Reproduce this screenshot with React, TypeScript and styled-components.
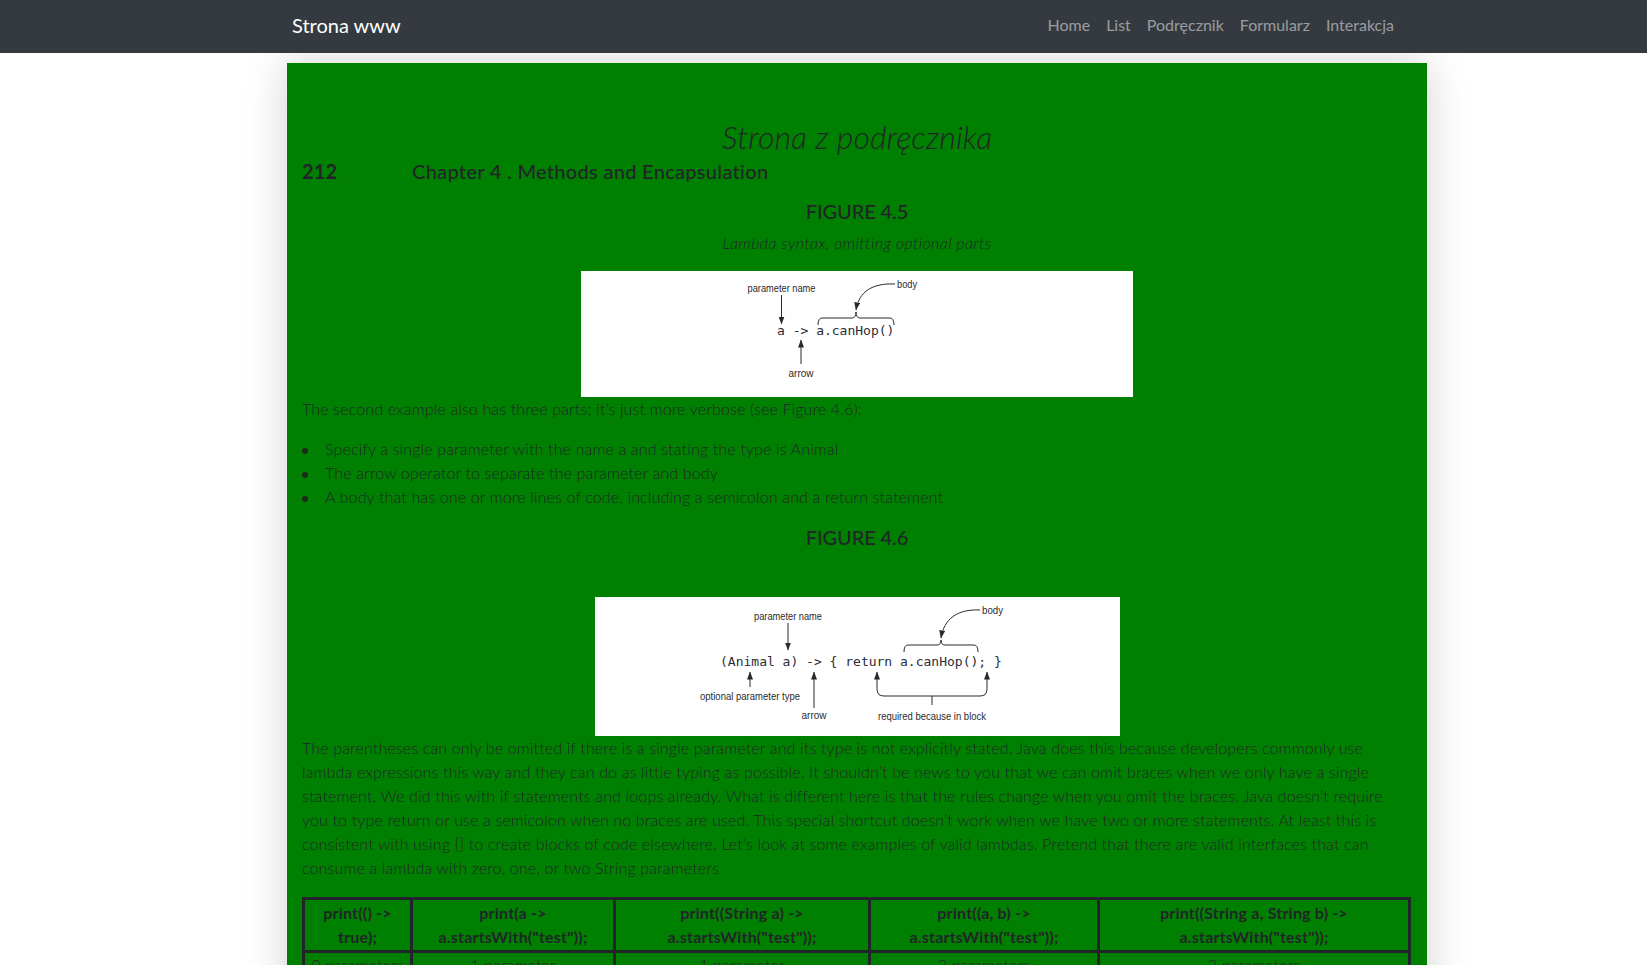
import React from "react";
import styled, { createGlobalStyle } from "styled-components";

const GlobalStyle = createGlobalStyle`
  html, body { margin: 0; padding: 0; background: #ffffff; }
  body {
    font-family: Lato, "Noto Sans", sans-serif;
    color: #212529;
    font-size: 16px;
    line-height: 1.5;
  }
  * { box-sizing: border-box; }
`;

const Navbar = styled.nav`
  position: relative;
  z-index: 1;
  background: #343a40;
  height: 53px;
  padding-bottom: 4px;
  display: flex;
  align-items: center;
`;

const NavInner = styled.div`
  width: 1110px;
  margin-left: 292px;
  display: flex;
  align-items: center;
  justify-content: space-between;
`;

const Brand = styled.a`
  color: #ffffff;
  font-size: 20px;
  line-height: 30px;
  text-decoration: none;
`;

const NavList = styled.ul`
  display: flex;
  list-style: none;
  margin: 0;
  padding: 0;
`;

const NavLink = styled.a`
  display: block;
  padding: 0 8px;
  color: rgba(255, 255, 255, 0.5);
  text-decoration: none;
  font-size: 16px;
  line-height: 24px;
`;

const Page = styled.main`
  width: 1140px;
  margin: 10px 0 0 287px;
  background: #008000;
  padding: 55px 15px 40px;
  box-shadow: 0 0 40px rgba(0, 0, 0, 0.18);
  font-weight: 300;
  letter-spacing: 0.15px;
`;

const Title = styled.h2`
  margin: 0 0 3px;
  font-size: 32px;
  line-height: 1.2;
  font-style: italic;
  font-weight: 300;
  text-align: center;
  letter-spacing: 0.1px;
`;

const ChapterRow = styled.div`
  display: flex;
  margin: 0 0 16px;
  font-size: 20px;
  line-height: 24px;
`;

const PageNum = styled.span`
  width: 110px;
  font-weight: 700;
`;

const ChapterTitle = styled.span`
  font-weight: 500;
  letter-spacing: 0.3px;
`;

const FigureHeading = styled.h5`
  margin: 0 0 8px;
  font-size: 20px;
  line-height: 24px;
  font-weight: 500;
  text-align: center;
  letter-spacing: -0.1px;
`;

const Caption = styled.p`
  margin: 0 0 16px;
  min-height: 24px;
  font-style: italic;
  text-align: center;
  letter-spacing: 0.4px;
`;

const FigureBox = styled.div`
  display: flex;
  justify-content: center;
`;

const FigureSvg = styled.svg`
  display: block;
  background: #ffffff;
  letter-spacing: 0;
`;

const Para = styled.p<{ $mb?: number }>`
  margin: 0 0 ${(p) => p.$mb ?? 16}px;
`;

const List = styled.ul`
  margin: 0 0 16px;
  padding: 0 0 0 23px;
  list-style: none;
`;

const Item = styled.li`
  line-height: 24px;
  &::before {
    content: "";
    display: inline-block;
    width: 6px;
    height: 6px;
    border-radius: 50%;
    background: #1d2a1f;
    margin-left: -23px;
    margin-right: 17px;
    vertical-align: middle;
  }
`;

const Table = styled.table`
  width: 1109px;
  border-collapse: collapse;
  table-layout: fixed;
  border: 3px solid #212529;
`;

const Col = styled.col<{ $w: number }>`
  width: ${(p) => p.$w}px;
`;

const Th = styled.th`
  border: 3px solid #212529;
  padding: 1px 4px;
  font-weight: 700;
  text-align: center;
  line-height: 24px;
  letter-spacing: 0.2px;
`;

const Td = styled.td`
  border: 3px solid #212529;
  padding: 0 4px 2px;
  text-align: center;
  font-weight: 300;
  line-height: 24px;
  white-space: nowrap;
`;

const LABEL = {
  fontFamily: '"Liberation Sans", Arial, sans-serif',
  fontSize: 11,
  fill: "#2b2b2b",
} as const;

const CODE = {
  fontFamily: '"DejaVu Sans Mono", monospace',
  fontSize: 13,
  fill: "#2a2b38",
  whiteSpace: "pre",
} as const;

function brace(xa: number, xb: number, xc: number, yb: number, yl: number, yt: number) {
  return `M ${xa} ${yb} Q ${xa} ${yl} ${xa + 4} ${yl} L ${xc - 4} ${yl} Q ${xc} ${yl} ${xc} ${yt} Q ${xc} ${yl} ${xc + 4} ${yl} L ${xb - 4} ${yl} Q ${xb} ${yl} ${xb} ${yb}`;
}

const Arrowhead: React.FC<{ id: string }> = ({ id }) => (
  <marker
    id={id}
    viewBox="0 0 8 6"
    refX="7.5"
    refY="3"
    markerWidth="8"
    markerHeight="6"
    markerUnits="userSpaceOnUse"
    orient="auto-start-reverse"
  >
    <path d="M0,0 L8,3 L0,6 Z" fill="#2b2b2b" />
  </marker>
);

const Figure45: React.FC = () => (
  <FigureSvg width={552} height={126} viewBox="0 0 552 126">
    <defs>
      <Arrowhead id="ah1" />
    </defs>
    <g stroke="#2b2b2b" strokeWidth={1} fill="none">
      <line x1={200.5} y1={24} x2={200.5} y2={53} markerEnd="url(#ah1)" />
      <path d={brace(237, 313, 275, 54, 47, 41)} />
      <path d="M 314 13 C 292 12 278 20 275 39" markerEnd="url(#ah1)" />
      <line x1={220} y1={93} x2={220} y2={69} markerEnd="url(#ah1)" />
    </g>
    <text x={200.5} y={21} textAnchor="middle" textLength={68} lengthAdjust="spacingAndGlyphs" style={LABEL}>
      parameter name
    </text>
    <text x={316} y={17} textLength={20} lengthAdjust="spacingAndGlyphs" style={LABEL}>
      body
    </text>
    <text x={196} y={64} style={CODE}>
      a -&gt; a.canHop()
    </text>
    <text x={220} y={106} textAnchor="middle" textLength={25} lengthAdjust="spacingAndGlyphs" style={LABEL}>
      arrow
    </text>
  </FigureSvg>
);

const Figure46: React.FC = () => (
  <FigureSvg width={525} height={139} viewBox="0 0 525 139">
    <defs>
      <Arrowhead id="ah2" />
    </defs>
    <g stroke="#2b2b2b" strokeWidth={1} fill="none">
      <line x1={193} y1={26} x2={193} y2={53} markerEnd="url(#ah2)" />
      <path d={brace(309, 383, 346, 55, 48, 43)} />
      <path d="M 385 13 C 362 12 349 22 346 41" markerEnd="url(#ah2)" />
      <line x1={155} y1={90} x2={155} y2={75} markerEnd="url(#ah2)" />
      <line x1={219} y1={111} x2={219} y2={75} markerEnd="url(#ah2)" />
      <path
        d="M 282 75 L 282 92 Q 282 99 289 99 L 385 99 Q 392 99 392 92 L 392 75"
        markerStart="url(#ah2)"
        markerEnd="url(#ah2)"
      />
      <line x1={337} y1={99} x2={337} y2={108} />
    </g>
    <text x={193} y={22.5} textAnchor="middle" textLength={68} lengthAdjust="spacingAndGlyphs" style={LABEL}>
      parameter name
    </text>
    <text x={387} y={17} textLength={21} lengthAdjust="spacingAndGlyphs" style={LABEL}>
      body
    </text>
    <text x={125} y={69} style={CODE}>
      (Animal a) -&gt; {"{"} return a.canHop(); {"}"}
    </text>
    <text x={155} y={102.5} textAnchor="middle" textLength={100} lengthAdjust="spacingAndGlyphs" style={LABEL}>
      optional parameter type
    </text>
    <text x={219} y={121.5} textAnchor="middle" textLength={25} lengthAdjust="spacingAndGlyphs" style={LABEL}>
      arrow
    </text>
    <text x={337} y={122.5} textAnchor="middle" textLength={108} lengthAdjust="spacingAndGlyphs" style={LABEL}>
      required because in block
    </text>
  </FigureSvg>
);

const navItems = ["Home", "List", "Podręcznik", "Formularz", "Interakcja"];

const paraLines = [
  "The parentheses can only be omitted if there is a single parameter and its type is not explicitly stated. Java does this because developers commonly use",
  "lambda expressions this way and they can do as little typing as possible. It shouldn’t be news to you that we can omit braces when we only have a single",
  "statement. We did this with if statements and loops already. What is different here is that the rules change when you omit the braces. Java doesn’t require",
  "you to type return or use a semicolon when no braces are used. This special shortcut doesn’t work when we have two or more statements. At least this is",
  "consistent with using {} to create blocks of code elsewhere. Let’s look at some examples of valid lambdas. Pretend that there are valid interfaces that can",
  "consume a lambda with zero, one, or two String parameters",
];

const headers = [
  "print(() -> true);",
  'print(a -> a.startsWith("test"));',
  'print((String a) -> a.startsWith("test"));',
  'print((a, b) -> a.startsWith("test"));',
  'print((String a, String b) -> a.startsWith("test"));',
];
const counts = ["0 parameters", "1 parameter", "1 parameter", "2 parameters", "2 parameters"];
const colWidths = [108, 203, 255, 229, 311];

export default function App() {
  return (
    <>
      <GlobalStyle />
      <Navbar>
        <NavInner>
          <Brand href="#">Strona www</Brand>
          <NavList>
            {navItems.map((n) => (
              <li key={n}>
                <NavLink href="#">{n}</NavLink>
              </li>
            ))}
          </NavList>
        </NavInner>
      </Navbar>
      <Page>
        <Title>Strona z podręcznika</Title>
        <ChapterRow>
          <PageNum>212</PageNum>
          <ChapterTitle>Chapter 4 . Methods and Encapsulation</ChapterTitle>
        </ChapterRow>
        <FigureHeading>FIGURE 4.5</FigureHeading>
        <Caption>Lambda syntax, omitting optional parts</Caption>
        <FigureBox>
          <Figure45 />
        </FigureBox>
        <Para>The second example also has three parts; it’s just more verbose (see Figure 4.6):</Para>
        <List>
          <Item>Specify a single parameter with the name a and stating the type is Animal</Item>
          <Item>The arrow operator to separate the parameter and body</Item>
          <Item>A body that has one or more lines of code, including a semicolon and a return statement</Item>
        </List>
        <FigureHeading>FIGURE 4.6</FigureHeading>
        <Caption />
        <FigureBox>
          <Figure46 />
        </FigureBox>
        <Para $mb={17}>
          {paraLines.map((l, i) => (
            <React.Fragment key={i}>
              {l}
              {i < paraLines.length - 1 && <br />}
            </React.Fragment>
          ))}
        </Para>
        <Table>
          <colgroup>
            {colWidths.map((w, i) => (
              <Col key={i} $w={w} />
            ))}
          </colgroup>
          <thead>
            <tr>
              {headers.map((h) => (
                <Th key={h}>{h}</Th>
              ))}
            </tr>
          </thead>
          <tbody>
            <tr>
              {counts.map((c, i) => (
                <Td key={i}>{c}</Td>
              ))}
            </tr>
          </tbody>
        </Table>
      </Page>
    </>
  );
}
